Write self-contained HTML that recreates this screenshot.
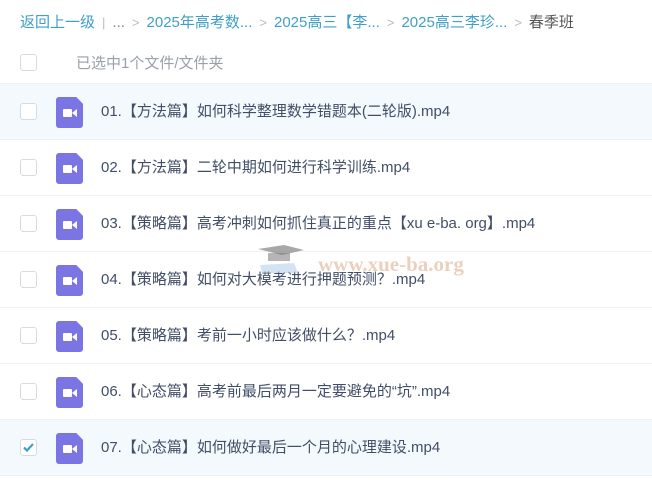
<!DOCTYPE html>
<html><head><meta charset="utf-8"><style>
*{margin:0;padding:0;box-sizing:border-box}
body{width:652px;height:502px;background:#fff;font-family:"Liberation Sans","Noto Sans CJK SC",sans-serif;overflow:hidden;position:relative;color:#424e67}
.bc{position:absolute;left:20px;top:11px;font-size:15px;color:#3f9fc9;white-space:nowrap}
.bc .g{color:#bbb;font-size:13px;margin:0 7px}
.bc .k{color:#555}
.hd{position:absolute;top:40px;left:0;width:652px;height:44px;border-bottom:1px solid #eef2f6}
.cb{position:absolute;left:20px;width:17px;height:17px;border:1px solid #d6dbe2;border-radius:3px;background:#fff}
.hd .cb{top:14px}
.hd span{position:absolute;left:76px;top:12px;font-size:15px;color:#9aa0a8}
.row{position:absolute;left:0;width:652px;height:56px;border-bottom:1px solid #eef2f6}
.row.s{background:#f3f9fd}
.row .cb{top:19px}
.ic{position:absolute;left:56px;top:13px;width:27px;height:31px;background:#7b74e3;border-radius:3px;clip-path:polygon(0 0,75% 0,100% 22%,100% 100%,0 100%)}
.ic i{position:absolute;left:7px;top:12px;width:9px;height:8px;background:#fff;border-radius:1px}
.ic b{position:absolute;left:16px;top:12px;width:0;height:0;border-top:4px solid transparent;border-bottom:4px solid transparent;border-right:5px solid #fff}
.row .t{position:absolute;left:101px;top:16px;font-size:15px;color:#424e67;white-space:nowrap}
.wm{position:absolute;left:318px;top:252px;font-family:"Liberation Serif",serif;font-weight:bold;font-size:21px;color:rgba(200,120,60,0.35)}
.cap{position:absolute;left:254px;top:243px;width:52px;height:30px}
</style></head><body>
<div class="bc">返回上一级<span class="g">|</span><span style="color:#888">...</span><span class="g">&gt;</span>2025年高考数...<span class="g">&gt;</span>2025高三【李...<span class="g">&gt;</span>2025高三李珍...<span class="g">&gt;</span><span class="k">春季班</span></div>
<div class="hd"><div class="cb"></div><span>已选中1个文件/文件夹</span></div>

<div class="row s" style="top:84px"><div class="cb"></div><div class="ic"><i></i><b></b></div><div class="t">01.【方法篇】如何科学整理数学错题本(二轮版).mp4</div></div>
<div class="row" style="top:140px"><div class="cb"></div><div class="ic"><i></i><b></b></div><div class="t">02.【方法篇】二轮中期如何进行科学训练.mp4</div></div>
<div class="row" style="top:196px"><div class="cb"></div><div class="ic"><i></i><b></b></div><div class="t">03.【策略篇】高考冲刺如何抓住真正的重点【xu e-ba. org】.mp4</div></div>
<div class="row" style="top:252px"><div class="cb"></div><div class="ic"><i></i><b></b></div><div class="t">04.【策略篇】如何对大模考进行押题预测？.mp4</div></div>
<div class="row" style="top:308px"><div class="cb"></div><div class="ic"><i></i><b></b></div><div class="t">05.【策略篇】考前一小时应该做什么？.mp4</div></div>
<div class="row" style="top:364px"><div class="cb"></div><div class="ic"><i></i><b></b></div><div class="t">06.【心态篇】高考前最后两月一定要避免的“坑”.mp4</div></div>
<div class="row s" style="top:420px"><div class="cb"><svg width="15" height="15" viewBox="0 0 15 15" style="position:absolute;left:0;top:0"><path d="M3 7.5l3 3 6-6.5" stroke="#3f9fc9" stroke-width="2.2" fill="none"/></svg></div><div class="ic"><i></i><b></b></div><div class="t">07.【心态篇】如何做好最后一个月的心理建设.mp4</div></div>

<svg class="cap" viewBox="0 0 52 30"><path d="M4 6 L30 2 L50 7 L28 12 Z" fill="rgba(110,110,110,0.6)"/><path d="M14 10 L14 18 L36 18 L36 10 Z" fill="rgba(120,120,120,0.55)"/><path d="M6 22 L40 20 L44 30 L8 30 Z" fill="rgba(170,200,230,0.5)"/></svg>
<div class="wm">www.xue-ba.org</div>
</body></html>
